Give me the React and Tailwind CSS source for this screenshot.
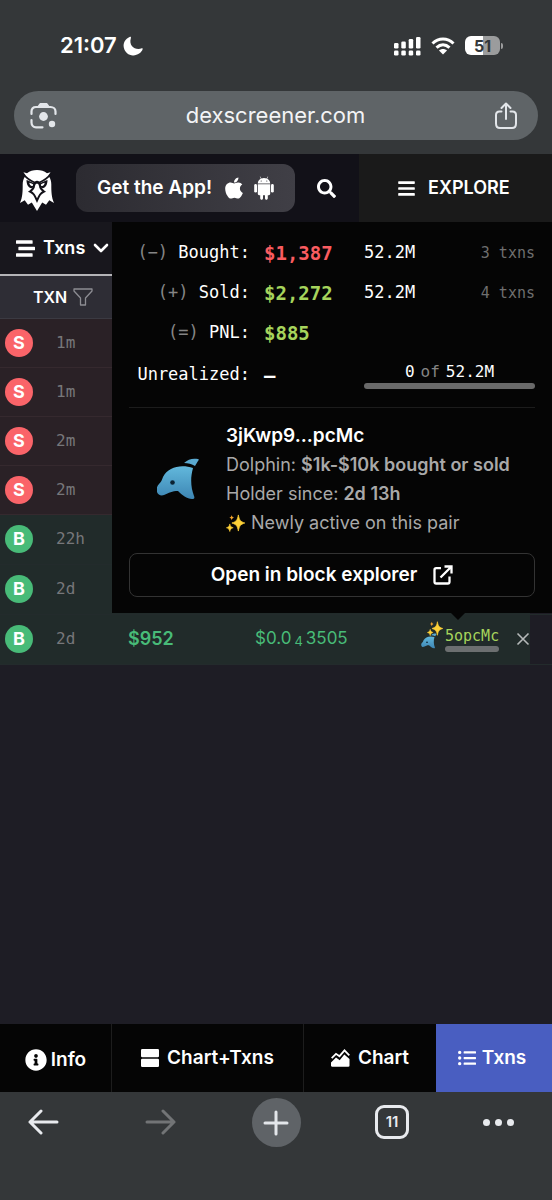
import { FaApple, FaBars, FaInfoCircle, FaListUl, FaSearch, FaStream } from 'react-icons/fa';

const TXNS = [
  { id: 1, type: 'S', age: '1m' },
  { id: 2, type: 'S', age: '1m' },
  { id: 3, type: 'S', age: '2m' },
  { id: 4, type: 'S', age: '2m' },
  { id: 5, type: 'B', age: '22h' },
  { id: 6, type: 'B', age: '2d' },
  { id: 7, type: 'B', age: '2d', usd: '$952', price: ['$0.0', '4', '3505'], maker: '5opcMc' },
];

const TOTALS = [
  { sign: '(−)', label: 'Bought:', value: '$1,387', color: 'text-[#fa5c60]', amount: '52.2M', txns: '3 txns' },
  { sign: '(+)', label: 'Sold:', value: '$2,272', color: 'text-[#a6d45c]', amount: '52.2M', txns: '4 txns' },
  { sign: '(=)', label: 'PNL:', value: '$885', color: 'text-[#a6d45c]' },
];

const MONO = "font-['DejaVu_Sans_Mono',monospace]";

function Logo() {
  return (
    <svg viewBox="0 0 34 41" className="h-[41px] w-[34px]" aria-hidden="true">
      <path fill="#fff" d="M17 0c3.800 0 7.300 1 10 3.200l3.400-1L29 6.500c1.600 2.300 2.300 5 2.300 8 0 7.500.2 12.500 2.700 18.500l-4.700-2.800-3.300 4.600-3.800-2.300L17 41l-5.200-8.500L8 34.800l-3.300-4.600L0 33c2.500-6 2.700-11 2.700-18.500 0-3 .7-5.700 2.300-8L3.600 2.200l3.400 1C9.700 1 13.200 0 17 0Z" />
      <path fill="none" stroke="#121118" strokeWidth="1.700" strokeLinejoin="round" d="M3.200 3.500C6 8 10 10.500 14.500 12.500L17 11.500l2.500 1C24 10.500 28 8 30.800 3.500" />
      <path fill="#121118" d="M6.500 10c3 1.200 5.500 2 8 3.600.5 2.500-.8 4-3 4.600-3 0-5-3.500-5-8.200ZM27.500 10c-3 1.200-5.500 2-8 3.600-.5 2.500.8 4 3 4.600 3 0 5-3.500 5-8.200Z" />
      <path fill="#fff" d="M9.300 12.800c1.600.5 2.900 1 4 1.700 0 .9-.7 1.600-1.700 1.600-1.200-.4-2-1.500-2.300-3.300ZM24.700 12.800c-1.600.5-2.900 1-4 1.700 0 .9.7 1.600 1.700 1.600 1.200-.4 2-1.500 2.300-3.300Z" />
      <path fill="#fff" stroke="#121118" strokeWidth="2" strokeLinejoin="miter" d="M17 12.500c2 0 2.800 1.500 3 3.500.1 2.300.8 3.300 4 5.500-3.500 1.500-4.500 3.500-7 9-2.500-5.500-3.500-7.500-7-9 3.200-2.200 3.900-3.200 4-5.500.2-2 1-3.500 3-3.500Z" />
    </svg>
  );
}

function AndroidIcon() {
  return (
    <svg viewBox="0 0 20 24" className="h-6 w-5" fill="#fff" aria-hidden="true">
      <path d="M3.800 7.500C3.900 5.300 5.100 3.600 6.900 2.600L5.800.7l.4-.2 1.200 2c.8-.3 1.700-.5 2.600-.5s1.800.2 2.600.5l1.200-2 .4.200-1.100 1.900c1.800 1 3 2.700 3.100 4.900ZM7.200 5.600a.6.6 0 1 0 0-1.200.6.600 0 0 0 0 1.200Zm5.600 0a.6.6 0 1 0 0-1.200.6.600 0 0 0 0 1.200Z" fillRule="evenodd" />
      <path d="M3.800 8.200h12.400v9.600c0 .8-.6 1.400-1.400 1.400h-1v3.100c0 .9-.6 1.500-1.400 1.500s-1.400-.6-1.400-1.500v-3.100H9v3.100c0 .9-.6 1.500-1.400 1.500s-1.400-.6-1.400-1.500v-3.100h-1c-.8 0-1.400-.6-1.400-1.400Z" />
      <rect x="0.200" y="8" width="2.800" height="8.600" rx="1.400" />
      <rect x="17" y="8" width="2.800" height="8.600" rx="1.400" />
    </svg>
  );
}

function Dolphin({ className }) {
  return (
    <svg viewBox="0 0 42 44" className={className} aria-hidden="true">
      <defs>
        <linearGradient id="dolphin" x1="0" y1="0" x2="0" y2="1">
          <stop offset="0" stopColor="#62b8dc" />
          <stop offset="1" stopColor="#3d86b4" />
        </linearGradient>
      </defs>
      <path fill="url(#dolphin)" d="M36 11C24 7 11 10 6 20c-1 3-2 5-4 7-2 2-3 5-2 8 1 3 4 4 7 3 5-2 8-4 14-4 4 4 9 8 14 8 2 0 3-1 2-3-3-8-4-17-1-28Z" />
      <path fill="#5aa9d0" d="M27 6c4-4 9-5 14-4 1 0 1 1 0 2l-3 5c-3-2-7-3-11-3Z" />
      <circle cx="15.500" cy="25.500" r="2.300" fill="#0b2233" />
    </svg>
  );
}

function Sparkles({ className }) {
  return (
    <svg viewBox="0 0 20 18" className={className} fill="#fdd037" aria-hidden="true">
      <path d="M13 .5c1 5.500 2.200 7 6.800 8.500-4.600 1.500-5.800 3-6.800 8.500-1-5.500-2.200-7-6.800-8.500C10.800 7.500 12 6 13 .5Z" stroke="#fdd037" strokeWidth="0.800" />
      <path d="M4 10c.6 2.500 1.200 3.200 3.600 4-2.400.8-3 1.500-3.600 4-.6-2.500-1.200-3.200-3.600-4C2.800 13.200 3.400 12.500 4 10Z" stroke="#fdd037" strokeWidth="0.600" />
      <path fill="#f6a52c" d="M6 .5c.4 1.700.8 2.200 2.500 2.800-1.700.6-2.100 1.100-2.500 2.800-.4-1.700-.8-2.200-2.500-2.800C5.200 2.700 5.600 2.200 6 .5Z" />
    </svg>
  );
}

function StatusBar() {
  return (
    <div className="flex h-[91px] items-center justify-between pl-[60px] pr-[49px]">
      <div className="flex items-center gap-[6px] text-[22px] font-semibold text-white">
        21:07
        <svg viewBox="0 0 20 20" className="size-5" fill="#fff" aria-hidden="true">
          <path d="M7 .8C2 3 0 7 .8 11.500 1.800 16.500 6 19.700 10.500 19.400c4-.2 8-2.500 9.200-6.400.2-.7-.3-1-.9-.7C12.500 14.700 5.300 10 7.900 1.900c.2-.7-.1-1.400-.9-1.100Z" />
        </svg>
      </div>
      <div className="flex items-center">
        <svg viewBox="0 0 27 20" className="mr-[10px] h-5 w-[27px]" fill="#fff" aria-hidden="true">
          <rect x="0" y="7" width="4.500" height="5.500" rx="1.300" />
          <rect x="7.300" y="5.500" width="4.500" height="7" rx="1.300" />
          <rect x="14.700" y="3" width="4.500" height="9.500" rx="1.300" />
          <rect x="22" y="1" width="4.500" height="11.500" rx="1.300" />
          <rect x="0" y="14.500" width="4.500" height="5" rx="1.300" />
          <rect x="7.300" y="14.500" width="4.500" height="5" rx="1.300" />
          <rect x="14.700" y="14.500" width="4.500" height="5" rx="1.300" />
          <rect x="22" y="14.500" width="4.500" height="5" rx="1.300" />
        </svg>
        <svg viewBox="0 0 24 18" className="mr-[10px] h-[18px] w-6" fill="none" stroke="#fff" strokeWidth="3" aria-hidden="true">
          <path d="M1.500 6.500c6-6 15-6 21 0" />
          <path d="M5.500 10.600c4-3.700 9-3.700 13 0" />
          <path fill="#fff" stroke="none" d="M12 17.500l-4-4c2.300-2 5.700-2 8 0Z" />
        </svg>
        <div className="flex h-[19px] w-[35px] items-center justify-center rounded-md bg-linear-to-r from-white from-51% to-[#9b9c9d] to-51% text-base font-bold text-[#34373a]">
          51
        </div>
        <div className="ml-px h-[6px] w-[2px] rounded-r-full bg-[#9b9c9d]" />
      </div>
    </div>
  );
}

function AddressBar() {
  return (
    <div className="mx-[14px] mb-[14px] flex h-[49px] items-center justify-between rounded-full bg-[#5f6467] px-4">
      <button type="button" aria-label="Search with camera">
        <svg viewBox="0 0 27 27" className="size-[27px]" fill="none" stroke="#e3e6ea" strokeWidth="2.200" strokeLinecap="round" aria-hidden="true">
          <path d="M1.500 12V9.500C1.500 6.500 3.500 5 6 5h14.500c3 0 5 2 5 4.500V12M1.500 18v2.500c0 3 2 4.800 4.500 4.800h6.500" />
          <path fill="#e3e6ea" stroke="none" d="M7 5l2-2.800C9.500 1.300 10 1 11 1h5c1 0 1.500.3 2 1.200L20 5Z" />
          <circle cx="13.500" cy="14.500" r="4.400" fill="#e3e6ea" stroke="none" />
          <circle cx="22" cy="22" r="3.200" fill="#e3e6ea" stroke="none" />
        </svg>
      </button>
      <input
        aria-label="Address"
        defaultValue="dexscreener.com"
        className="min-w-0 flex-1 bg-transparent text-center text-[22px] text-[#f3f4f6] outline-none"
      />
      <button type="button" aria-label="Share" className="pr-1">
        <svg viewBox="0 0 24 28" className="h-7 w-6" fill="none" stroke="#e3e6ea" strokeWidth="2" strokeLinecap="round" strokeLinejoin="round" aria-hidden="true">
          <path d="M7.500 9.500H5.500C3 9.500 2 11 2 13v8.500C2 24.500 3.500 26 6 26h12c2.500 0 4-1.500 4-4.500V13c0-2-1-3.500-3.500-3.500h-2" />
          <path d="M12 17V2M7.500 6 12 1.500 16.500 6" />
        </svg>
      </button>
    </div>
  );
}

function SiteHeader() {
  return (
    <header className="flex h-[68px] bg-[#121118] text-lg font-semibold text-white">
      <div className="flex flex-1 items-center pl-5">
        <a href="#home" aria-label="DEX Screener" className="pt-1">
          <Logo />
        </a>
        <a href="#app" className="ml-[22px] flex h-12 w-[219px] items-center justify-center gap-[10px] rounded-xl bg-linear-to-r from-[#2c2b31] to-[#403f46] text-[19px]">
          Get the App!
          <span className="flex items-center gap-2">
            <FaApple size={24} />
            <AndroidIcon />
          </span>
        </a>
        <button type="button" aria-label="Search" className="flex flex-1 justify-center">
          <FaSearch size={19} />
        </button>
      </div>
      <button type="button" className="flex w-[35%] items-center justify-center gap-3 bg-[#1a1a1a] pr-1">
        <FaBars size={19} />
        EXPLORE
      </button>
    </header>
  );
}

function MakerPopup() {
  return (
    <div role="dialog" aria-label="Maker" className="absolute left-[112px] right-0 top-0 bg-[#050505] px-[17px] pb-4 pt-[11px] text-white">
      <div className={`grid grid-cols-[121px_100px_1fr] items-center ${MONO}`}>
        {TOTALS.map(t => (
          <div key={t.label} className="col-span-3 grid h-10 grid-cols-subgrid items-center">
            <span className="whitespace-nowrap text-right text-[17px]">
              <span className="text-[#858585]">{t.sign}</span> {t.label}
            </span>
            <span className={`pl-[14px] text-[19px] font-bold ${t.color}`}>{t.value}</span>
            <span className="flex items-center justify-between pl-[14px]">
              <span className="text-[17px]">{t.amount}</span>
              <span className="text-[15px] text-[#6f6f6f]">{t.txns}</span>
            </span>
          </div>
        ))}
        <div className="col-span-3 grid h-11 grid-cols-subgrid items-center">
          <span className="text-right text-[17px]">Unrealized:</span>
          <span className="pl-[14px] text-[19px] font-bold">–</span>
          <div className="pl-[14px] text-center">
            <div className="flex justify-center gap-[6px] text-base leading-[22px]">
              0 <span className="text-[#858585]">of</span> 52.2M
            </div>
            <div className="h-[6px] rounded-full bg-[#696969]" />
          </div>
        </div>
      </div>

      <div className="mt-[10px] flex items-center border-t border-[#1c1c1c] pt-[13px]">
        <div className="flex w-[97px] justify-center">
          <Dolphin className="h-[44px] w-[42px]" />
        </div>
        <div className="whitespace-nowrap text-lg leading-[29px] text-[#a9a9a9]">
          <p className="text-[19px] leading-[29px] font-semibold text-white">3jKwp9...pcMc</p>
          <p>Dolphin: <b className="font-semibold">$1k-$10k bought or sold</b></p>
          <p>Holder since: <b className="font-semibold">2d 13h</b></p>
          <p className="flex items-center gap-[6px]">
            <Sparkles className="h-[18px] w-[19px]" />
            Newly active on this pair
          </p>
        </div>
      </div>

      <a href="#explorer" className="mt-4 flex h-11 items-center justify-center gap-4 rounded-lg border border-[#333] text-[19px] font-semibold">
        Open in block explorer
        <svg viewBox="0 0 20 20" className="size-5" fill="none" stroke="#fff" strokeWidth="2.300" aria-hidden="true">
          <path d="M8 3.200H3.200c-1.200 0-1.700.6-1.700 1.700v11.800c0 1.200.6 1.800 1.700 1.800h11.600c1.200 0 1.700-.6 1.700-1.800V11.500" />
          <path d="M11.500 1.500h7v7M18 2 7.500 12.500" />
        </svg>
      </a>
      <svg viewBox="0 0 14 7" className="absolute left-[339px] top-full h-[7px] w-[14px]" fill="#050505" aria-hidden="true">
        <path d="M0 0h14L7 7Z" />
      </svg>
    </div>
  );
}

function TxnTable() {
  return (
    <table className="w-full table-fixed border-collapse text-left">
      <thead>
        <tr className="h-[42px] border-b border-[#3b3a42] bg-[#2e2d35]">
          <th className="w-[112px] pl-[33px] text-base font-semibold text-white" colSpan={2}>
            <span className="flex items-center gap-[6px]">
              TXN
              <svg viewBox="0 0 20 18" className="h-[18px] w-5" fill="none" stroke="#8d8d93" strokeWidth="1.300" strokeLinejoin="round" aria-hidden="true">
                <path d="M1 1h18v2l-6.500 7v7h-5v-7L1 3Z" />
              </svg>
            </span>
          </th>
          <th className="w-[115px]" aria-label="USD" />
          <th aria-label="Price" />
          <th className="w-[131px]" aria-label="Maker" />
          <th className="w-[22px]" aria-label="Scroll" />
        </tr>
      </thead>
      <tbody>
        {TXNS.map(t => (
          <tr key={t.id} className={t.type === 'S' ? 'h-[49px] border-b border-[#35292e] bg-[#2a2126]' : 'h-[50px] border-b border-[#232b2c] bg-[#212b2a]'}>
            <td className="w-[56px] pl-[5px]">
              <span className={`flex size-7 items-center justify-center rounded-full text-lg font-bold text-white ${t.type === 'S' ? 'bg-[#fa6469]' : 'bg-[#48bb78]'}`}>
                {t.type}
              </span>
            </td>
            <td className={`w-[56px] text-base text-[#77777a] ${MONO}`}>{t.age}</td>
            <td className="pl-4 text-lg font-semibold text-[#48bb78]">{t.usd}</td>
            <td className="pl-7 text-[17px] text-[#48bb78]">
              {t.price && (
                <span className="flex items-center gap-[3px]">
                  {t.price[0]}
                  <span className="self-end text-[13px]">{t.price[1]}</span>
                  {t.price[2]}
                </span>
              )}
            </td>
            <td>
              {t.maker && (
                <div className="flex items-center justify-between">
                  <div className="flex items-center pl-[22px]">
                    <span className="relative w-6">
                      <Dolphin className="mt-1 size-4" />
                      <Sparkles className="absolute -top-2 left-[6px] h-[15px] w-4" />
                    </span>
                    <a href="#maker" className={`block text-[15px] leading-5 text-[#a6d45c] ${MONO}`}>
                      {t.maker}
                      <span className="block h-[6px] rounded-full bg-[#6c6f70]" />
                    </a>
                  </div>
                  <button type="button" aria-label="Clear maker filter">
                    <svg viewBox="0 0 14 14" className="size-[14px]" stroke="#b5b9b9" strokeWidth="1.600" aria-hidden="true">
                      <path d="M1.500 1.500l11 11M12.500 1.500l-11 11" />
                    </svg>
                  </button>
                </div>
              )}
            </td>
            <td className="bg-[#1e1d25]" />
          </tr>
        ))}
      </tbody>
    </table>
  );
}

function BottomTabs() {
  return (
    <nav className="grid h-[68px] grid-cols-[112fr_192fr_132fr_116fr] bg-[#050505] text-[19px] font-semibold text-white">
      <a href="#info" className="flex items-center justify-center gap-1 border-r border-[#1d1d1d] pt-1">
        <FaInfoCircle size={22} />
        Info
      </a>
      <a href="#chart-txns" className="flex items-center justify-center gap-2 border-r border-[#1d1d1d]">
        <svg viewBox="0 0 18 18" className="size-[18px]" fill="#fff" aria-hidden="true">
          <rect width="18" height="8.300" rx="1.200" />
          <rect y="9.700" width="18" height="8.300" rx="1.200" />
        </svg>
        Chart+Txns
      </a>
      <a href="#chart" className="flex items-center justify-center gap-2">
        <svg viewBox="0 0 19 18" className="h-[18px] w-[19px]" aria-hidden="true">
          <path fill="none" stroke="#fff" strokeWidth="1.800" d="M.7 9.200 5 4.800l3.500 2.400L13.500 1.400l4.800 5" />
          <path fill="#fff" d="M0 16.500v-3L5 8.500l3.700 2.700L13.300 5.600 18.500 10v6.500c0 .8-.4 1.200-1 1.200H1c-.6 0-1-.4-1-1.200Z" />
        </svg>
        Chart
      </a>
      <a href="#txns" aria-current="page" className="flex items-center justify-center gap-[6px] bg-[#495ec1] pr-1">
        <FaListUl size={18} />
        Txns
      </a>
    </nav>
  );
}

function BrowserToolbar() {
  return (
    <div className="grid h-[108px] grid-cols-[102fr_116fr_116fr_116fr_102fr] items-start justify-items-center bg-[#343739] pt-[6px]">
      <button type="button" aria-label="Back" className="flex h-12 items-center pr-4">
        <svg viewBox="0 0 31 26" className="h-[26px] w-[31px]" fill="none" stroke="#e8eaee" strokeWidth="3" strokeLinecap="round" strokeLinejoin="round" aria-hidden="true">
          <path d="M29 13H2M13 2 2 13l11 11" />
        </svg>
      </button>
      <button type="button" aria-label="Forward" className="flex h-12 items-center">
        <svg viewBox="0 0 31 26" className="h-[26px] w-[31px]" fill="none" stroke="#727476" strokeWidth="3" strokeLinecap="round" strokeLinejoin="round" aria-hidden="true">
          <path d="M2 13h27M18 2l11 11-11 11" />
        </svg>
      </button>
      <button type="button" aria-label="New tab" className="flex size-[49px] items-center justify-center rounded-full bg-[#5f6367]">
        <svg viewBox="0 0 26 26" className="size-[26px]" stroke="#e3e6ea" strokeWidth="3" strokeLinecap="round" aria-hidden="true">
          <path d="M13 2v22M2 13h22" />
        </svg>
      </button>
      <button type="button" aria-label="Tabs" className="mt-[7px] flex size-[34px] items-center justify-center rounded-[9px] border-[3px] border-[#e8eaee] text-[15px] font-semibold text-[#e8eaee]">
        11
      </button>
      <button type="button" aria-label="More" className="flex h-12 items-center gap-[5px] pr-[6px]">
        <span className="size-[7px] rounded-full bg-[#e8eaee]" />
        <span className="size-[7px] rounded-full bg-[#e8eaee]" />
        <span className="size-[7px] rounded-full bg-[#e8eaee]" />
      </button>
    </div>
  );
}

export default function App() {
  return (
    <div className="flex min-h-screen flex-col bg-[#1e1d25] font-['Inter',sans-serif]">
      <div className="bg-[#343739]">
        <StatusBar />
        <AddressBar />
      </div>
      <SiteHeader />
      <main className="relative flex-1">
        <div className="flex h-[54px] items-center border-b-2 border-[#b4b4b7] bg-[#18171d] pl-4">
          <button type="button" aria-haspopup="menu" className="flex items-center gap-2 text-lg font-semibold text-white">
            <FaStream size={19} />
            Txns
            <svg viewBox="0 0 16 10" className="h-[10px] w-4" fill="none" stroke="#fff" strokeWidth="2.600" strokeLinecap="round" strokeLinejoin="round" aria-hidden="true">
              <path d="M2 2l6 6 6-6" />
            </svg>
          </button>
        </div>
        <TxnTable />
        <MakerPopup />
      </main>
      <BottomTabs />
      <BrowserToolbar />
    </div>
  );
}
